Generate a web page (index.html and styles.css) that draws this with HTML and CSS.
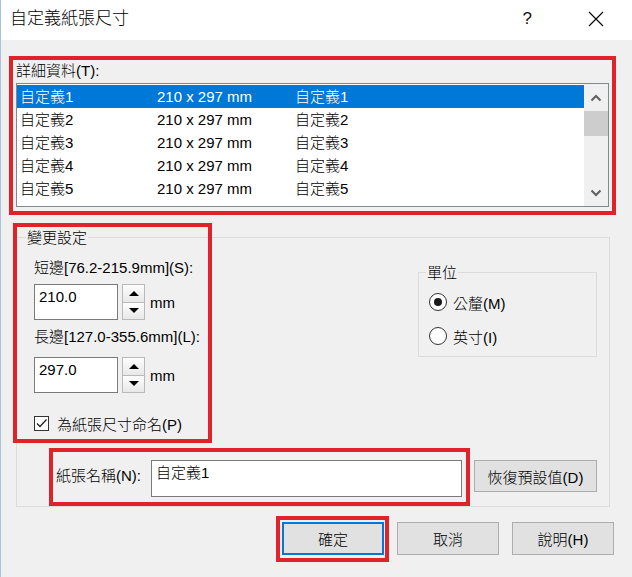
FILE: index.html
```html
<!DOCTYPE html>
<html lang="zh-Hant">
<head>
<meta charset="utf-8">
<title>自定義紙張尺寸</title>
<link rel="stylesheet" href="styles.css">
</head>
<body>
<div class="window">
  <div class="titlebar">
    <span class="title">自定義紙張尺寸</span>
    <span class="help">?</span>
    <span class="close">
      <svg width="16" height="16" viewBox="0 0 16 16"><path d="M1 1L15 15M15 1L1 15" stroke="#000" stroke-width="1.1" fill="none"/></svg>
    </span>
  </div>
  <div class="content">
    <div class="field-label">詳細資料(T):</div>
    <div class="listbox">
      <div class="rows">
        <div class="row selected"><span class="c1">自定義1</span><span class="c2">210 x 297 mm</span><span class="c3">自定義1</span></div>
        <div class="row"><span class="c1">自定義2</span><span class="c2">210 x 297 mm</span><span class="c3">自定義2</span></div>
        <div class="row"><span class="c1">自定義3</span><span class="c2">210 x 297 mm</span><span class="c3">自定義3</span></div>
        <div class="row"><span class="c1">自定義4</span><span class="c2">210 x 297 mm</span><span class="c3">自定義4</span></div>
        <div class="row"><span class="c1">自定義5</span><span class="c2">210 x 297 mm</span><span class="c3">自定義5</span></div>
      </div>
      <div class="scrollbar">
        <div class="sb-btn"><svg width="12" height="8" viewBox="0 0 12 8"><path d="M1.5 6.5L6 2L10.5 6.5" stroke="#606060" stroke-width="2" fill="none"/></svg></div>
        <div class="sb-thumb"></div>
        <div class="sb-track"></div>
        <div class="sb-btn"><svg width="12" height="8" viewBox="0 0 12 8"><path d="M1.5 1.5L6 6L10.5 1.5" stroke="#606060" stroke-width="2" fill="none"/></svg></div>
      </div>
    </div>

    <div class="group change">
      <div class="group-title">變更設定</div>
      <div class="change-top">
        <div class="sizes">
          <div class="size-label first">短邊[76.2-215.9mm](S):</div>
          <div class="spin-row">
            <div class="num-input">210.0</div>
            <div class="spinner">
              <div class="spin-btn"><span class="tri-up"></span></div>
              <div class="spin-btn"><span class="tri-down"></span></div>
            </div>
            <span class="unit">mm</span>
          </div>
          <div class="size-label second">長邊[127.0-355.6mm](L):</div>
          <div class="spin-row second">
            <div class="num-input">297.0</div>
            <div class="spinner">
              <div class="spin-btn"><span class="tri-up"></span></div>
              <div class="spin-btn"><span class="tri-down"></span></div>
            </div>
            <span class="unit">mm</span>
          </div>
          <div class="check-row">
            <span class="checkbox"><svg width="13" height="13" viewBox="0 0 13 13"><path d="M2 6.5L5 9.5L11.5 2.5" stroke="#222" stroke-width="1.3" fill="none"/></svg></span>
            <span>為紙張尺寸命名(P)</span>
          </div>
        </div>
        <div class="group units">
          <div class="group-title">單位</div>
          <div class="radio-row first"><span class="radio on"></span><span>公釐(M)</span></div>
          <div class="radio-row second"><span class="radio"></span><span>英寸(I)</span></div>
        </div>
      </div>
      <div class="name-row">
        <span class="name-label">紙張名稱(N):</span>
        <div class="name-input">自定義1</div>
        <div class="btn reset">恢復預設值(D)</div>
      </div>
    </div>

    <div class="buttons">
      <div class="btn main default">確定</div>
      <div class="btn main">取消</div>
      <div class="btn main">說明(H)</div>
    </div>
  </div>

  <div class="mark m1"></div>
  <div class="mark m2"></div>
  <div class="mark m3"></div>
  <div class="mark m4"></div>
</div>
</body>
</html>
```

FILE: styles.css
```css
* { box-sizing: border-box; }
html, body { margin: 0; padding: 0; }
body {
  font-family: "Liberation Sans", "Noto Sans CJK TC", sans-serif;
  font-size: 15px;
  font-weight: 300;
  color: #000;
  background: #f0f0f0;
}
.window {
  position: relative;
  width: 632px;
  height: 577px;
  overflow: hidden;
  background: #f0f0f0;
  box-shadow: inset 1px 0 0 #a9c2dc;
}
.titlebar {
  height: 40px;
  background: #fff;
  display: flex;
  align-items: center;
  padding-left: 10px;
  box-shadow: inset 1px 0 0 #a9c2dc;
}
.title { font-size: 17px; line-height: 20px; margin-top: -2px; }
.help {
  margin-left: auto;
  font-size: 17px;
  line-height: 20px;
  margin-top: -2px;
  color: #111;
}
.close {
  display: flex;
  margin-left: 56px;
  margin-right: 28px;
  margin-top: -2px;
}
.content { padding: 0 18px 0 16px; }
.field-label {
  margin-top: 21px;
  line-height: 20px;
  height: 20px;
}
.listbox {
  margin-top: 2px;
  width: 593px;
  height: 124px;
  border: 1px solid #828790;
  background: #fff;
  display: flex;
}
.rows { flex: 1; padding-top: 1px; }
.row {
  display: flex;
  height: 23px;
  line-height: 23px;
  padding-left: 3px;
  white-space: nowrap;
}
.row.selected { background: #0078d7; color: #fff; }
.c1 { width: 137px; }
.c2 { width: 138px; }
.scrollbar {
  width: 24px;
  background: #f0f0f0;
  display: flex;
  flex-direction: column;
}
.sb-btn {
  height: 27px;
  display: flex;
  align-items: center;
  justify-content: center;
}
.sb-thumb { height: 25px; background: #cdcdcd; }
.sb-track { flex: 1; }

.group {
  border: 1px solid #dcdcdc;
}
.group-title {
  display: inline-block;
  background: #f0f0f0;
  line-height: 18px;
  padding: 0 1px;
  margin-top: -9px;
  vertical-align: top;
}
.change {
  margin-top: 30px;
  width: 594px;
  height: 270px;
  padding-left: 17px;
}
.change > .group-title { display: block; width: max-content; margin-left: -8px; }
.change-top { display: flex; }
.sizes { display: flex; flex-direction: column; }
.size-label { line-height: 18px; }
.size-label.first { margin-top: 12px; }
.size-label.second { margin-top: 8px; }
.spin-row {
  display: flex;
  align-items: center;
  margin-top: 7px;
  height: 36px;
}
.spin-row.second { margin-top: 11px; }
.num-input {
  width: 84px;
  height: 36px;
  background: #fff;
  border: 1px solid #7a7a7a;
  padding: 2px 0 0 4px;
  line-height: 20px;
}
.spinner {
  margin-left: 4px;
  width: 23px;
  height: 36px;
  display: flex;
  flex-direction: column;
}
.spin-btn {
  flex: 1;
  border: 1px solid #b9b9b9;
  background: linear-gradient(#fdfdfd, #e8e8e8);
  display: flex;
  align-items: center;
  justify-content: center;
}
.spin-btn + .spin-btn { border-top: none; }
.tri-up, .tri-down {
  width: 0; height: 0;
  border-left: 5px solid transparent;
  border-right: 5px solid transparent;
}
.tri-up { border-bottom: 5px solid #000; }
.tri-down { border-top: 5px solid #000; }
.unit { margin-left: 5px; line-height: 18px; margin-top: 2px; }
.check-row {
  margin-top: 20px;
  height: 20px;
  display: flex;
  align-items: center;
}
.checkbox {
  width: 15px;
  height: 15px;
  border: 1px solid #333;
  background: #fff;
  display: flex;
  align-items: center;
  justify-content: center;
  margin-right: 8px;
}
.units {
  margin-left: auto;
  margin-right: 12px;
  margin-top: 25px;
  width: 179px;
  height: 85px;
  padding-left: 10px;
  display: flex;
  flex-direction: column;
}
.units > .group-title { align-self: flex-start; margin-left: -3px; }
.radio-row {
  height: 20px;
  display: flex;
  align-items: center;
}
.radio-row.first { margin-top: 10px; }
.radio-row.second { margin-top: 14px; }
.radio {
  width: 18px;
  height: 18px;
  border-radius: 50%;
  border: 1px solid #333;
  background: #fff;
  margin-right: 6px;
  display: flex;
  align-items: center;
  justify-content: center;
}
.radio.on::after {
  content: "";
  width: 8px;
  height: 8px;
  border-radius: 50%;
  background: #1a1a1a;
}
.name-row {
  display: flex;
  align-items: flex-start;
  margin-top: 27px;
  padding-left: 21px;
}
.name-label {
  width: 96px;
  line-height: 20px;
  margin-top: 6px;
  padding-left: 1px;
}
.name-input {
  width: 311px;
  height: 37px;
  background: #fff;
  border: 1px solid #7a7a7a;
  padding: 2px 0 0 4px;
  line-height: 20px;
}
.btn {
  background: #e1e1e1;
  border: 1px solid #adadad;
  display: flex;
  align-items: center;
  justify-content: center;
}
.reset {
  margin-left: 12px;
  width: 123px;
  height: 32px;
}
.buttons {
  display: flex;
  justify-content: flex-end;
  gap: 13px;
  margin-top: 15px;
}
.main { width: 102px; height: 33px; }
.default { border: 1px solid #0078d7; box-shadow: inset 0 0 0 1px #0078d7; }

.mark {
  position: absolute;
  border: 4px solid #e0222b;
  pointer-events: none;
}
.m1 { left: 9px; top: 56px; width: 607px; height: 159px; }
.m2 { left: 13px; top: 223px; width: 199px; height: 220px; }
.m3 { left: 49px; top: 448px; width: 421px; height: 58px; }
.m4 { left: 276px; top: 516px; width: 113px; height: 46px; }
```
